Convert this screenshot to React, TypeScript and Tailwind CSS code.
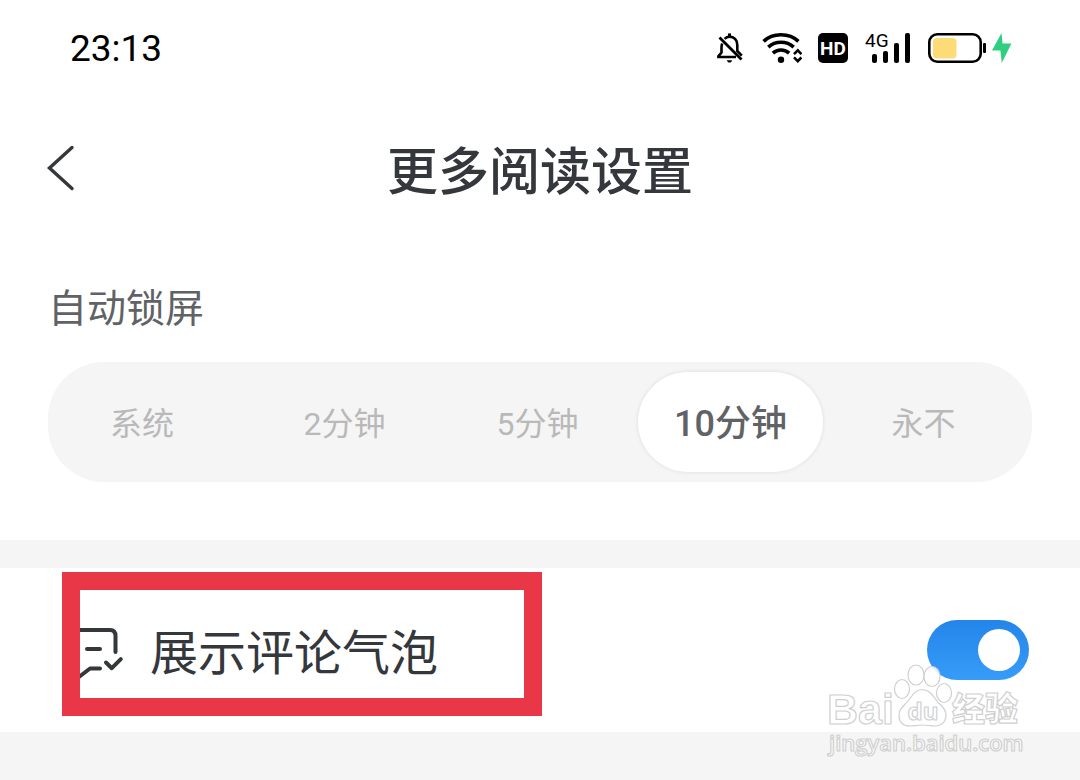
import React, { useState } from "react";

const lockOptions = ["系统", "2分钟", "5分钟", "10分钟", "永不"];

const StatusIcons = () => {
  return (
    <div className="flex items-center gap-4 text-black">
      {/* muted bell */}
      <svg className="h-[30px] w-[30px]" viewBox="0 0 30 30" fill="none" stroke="currentColor" strokeWidth="2.6">
        <path d="M3.5 4.5 25.5 26.5" strokeWidth="2.8" />
        <path d="M6.2 10.5C5.6 12 5.5 13 5.5 14.5V19.5L2.4 23.2V24H20" />
        <path d="M8.6 5.8C10 4.4 11.8 3.6 13.5 3.6C18 3.6 21.3 7 21.3 12V18L25.8 22.6" />
        <path d="M13.5 0.4V3.6" strokeWidth="3" />
        <path d="M10.8 27.3H16.2C15.6 29 14.8 29.6 13.5 29.6C12.2 29.6 11.4 29 10.8 27.3Z" fill="currentColor" stroke="none" />
      </svg>
      {/* wifi */}
      <svg className="h-[30px] w-[40px]" viewBox="0 0 40 30" fill="none" stroke="currentColor" strokeWidth="3.6">
        <path d="M1.6 8.4C6.2 3.9 12.2 1.8 19 1.8C25.8 1.8 31.8 3.9 36.4 8.4" />
        <path d="M6.3 14.2C9.8 11 14 9.3 19 9.3C24 9.3 28.2 11 31.7 14.2" />
        <path d="M10.9 20.1C13.2 18 15.8 17 19 17C22.2 17 24.8 18 27.1 20.1" />
        <circle cx="19" cy="26.8" r="3.2" fill="currentColor" stroke="none" />
        <path d="M32 21.2 35.8 17.4 39.4 21.2M32 24.4 35.8 28.2 39.4 24.4" strokeWidth="2.6" />
      </svg>
      {/* HD voice */}
      <svg className="h-[30px] w-[30px]" viewBox="0 0 30 30">
        <rect width="30" height="30" rx="5" fill="currentColor" />
        <text x="15" y="22" textAnchor="middle" fill="#fff" className="font-[Roboto] text-[19px] font-bold">
          HD
        </text>
      </svg>
      {/* signal */}
      <svg className="h-[30px] w-[48px] overflow-visible" viewBox="0 0 48 30" fill="currentColor">
        <text x="1" y="14" className="font-[Roboto] text-[19px]">
          4G
        </text>
        <rect x="8" y="21" width="5" height="9" rx="2" />
        <rect x="19" y="18" width="5" height="12" rx="2" />
        <rect x="30" y="10" width="5" height="20" rx="2" />
        <rect x="41" y="0" width="5" height="30" rx="2" />
      </svg>
      {/* battery, charging */}
      <svg className="h-[30px] w-[84px]" viewBox="0 0 84 30">
        <rect x="1.3" y="1.3" width="51.4" height="27.4" rx="8" fill="none" stroke="currentColor" strokeWidth="2.6" />
        <rect x="5" y="5" width="23.5" height="20.5" rx="4" fill="#fddc78" />
        <rect x="55" y="10" width="3" height="10" rx="1" fill="currentColor" />
        <path d="M73.5 0 64 17.6H72.4L73.8 30L83.4 10.6H74.6Z" fill="#2fcf80" />
      </svg>
    </div>
  );
};

const CommentIcon = () => {
  return (
    <svg
      className="h-[56px] w-[52px] shrink-0"
      viewBox="0 2 52 56"
      fill="none"
      stroke="#34373b"
      strokeWidth="4"
      strokeLinecap="round"
      strokeLinejoin="round"
    >
      <path d="M43.5 28V12Q43.5 6 38 6H8Q3 6 3 12V56L18 44.5H28" />
      <path d="M15 25H28" />
      <path d="M34 38.5 39.8 44.2 48.8 35.2" />
    </svg>
  );
};

const Watermark = () => {
  return (
    <svg
      className="pointer-events-none absolute top-[92px] right-[50px] h-[100px] w-[210px]"
      viewBox="0 0 210 100"
      fill="#fff"
      fillOpacity="0.85"
      stroke="#d0d0d0"
      strokeWidth="1.2"
    >
      <text x="7" y="64" className="font-['Liberation_Sans'] text-[43px] font-bold">
        Bai
      </text>
      <ellipse cx="82" cy="29" rx="7.5" ry="9.5" />
      <ellipse cx="96" cy="15" rx="8" ry="10" />
      <ellipse cx="112" cy="16.5" rx="8" ry="10" />
      <ellipse cx="124" cy="33" rx="7.5" ry="9.5" />
      <path d="M102 29.5C110 29.5 113 36 117 41C121 46 126 48 126 55C126 62 121 66 115 66C110 66 107 65 102 65C97 65 94 66 90 66C83 66 79 62 79 55C79 48 84 46 88 41C92 36 95 29.5 102 29.5Z" />
      <text x="103" y="60" textAnchor="middle" className="font-['Open_Sans'] text-[24px] font-bold">
        du
      </text>
      <text x="132" y="61" className="font-['Noto_Sans_CJK_SC'] text-[33px] font-black">
        经验
      </text>
      <text x="9" y="91" className="font-['Open_Sans'] text-[22px] font-semibold">
        jingyan.baidu.com
      </text>
    </svg>
  );
};

const App = () => {
  const [lock, setLock] = useState("10分钟");
  const [bubbles, setBubbles] = useState(true);

  return (
    <div className="flex min-h-screen flex-col bg-white font-[Roboto,'Noto_Sans_CJK_SC',sans-serif] text-[#34373b]">
      <div className="flex h-24 items-center justify-between pr-[68px] pl-[70px]">
        <time className="text-[37px] leading-none text-black">23:13</time>
        <StatusIcons />
      </div>

      <header className="grid h-36 grid-cols-[1fr_auto_1fr] items-center px-11">
        <button type="button" aria-label="返回" className="w-8">
          <svg className="h-[48px] w-8" viewBox="0 0 32 48" fill="none" stroke="currentColor" strokeWidth="3.4" strokeLinecap="round">
            <path d="M28 3.5 5.5 24 28 44.5" />
          </svg>
        </button>
        <h1 className="pt-[10px] text-[51px] font-medium">更多阅读设置</h1>
      </header>

      <div className="px-12 pt-[42px] pb-[58px]">
        <h2 id="lock-title" className="mb-[26px] text-[39px] leading-[54px] text-[#606266]">
          自动锁屏
        </h2>
        <div
          role="radiogroup"
          aria-labelledby="lock-title"
          className="grid h-[120px] grid-cols-[200fr_193fr_193fr_193fr_205fr] rounded-[56px] bg-[#f5f5f5] py-[10px]"
        >
          {lockOptions.map((option) => (
            <label
              key={option}
              className="flex cursor-pointer items-center justify-center pt-1 text-[32px] text-[#b9b9b9] first:pr-3 last:pr-3 has-checked:mx-1 has-checked:rounded-full has-checked:bg-white has-checked:text-[36px] has-checked:font-medium has-checked:text-[#606266] has-checked:shadow-[0_0_4px_rgba(0,0,0,0.1)]"
            >
              <input
                type="radio"
                name="lock"
                className="sr-only"
                checked={lock === option}
                onChange={() => setLock(option)}
              />
              {option}
            </label>
          ))}
        </div>
      </div>

      <div className="h-7 bg-[#f5f5f5]" />

      <section className="relative flex h-[164px] items-center pr-[51px] pl-[72px]">
        <div className="flex flex-1 items-center gap-[26px] pt-2">
          <CommentIcon />
          <label htmlFor="bubbles" className="text-[48px]">
            展示评论气泡
          </label>
        </div>
        <input
          id="bubbles"
          type="checkbox"
          role="switch"
          checked={bubbles}
          onChange={(e) => setBubbles(e.target.checked)}
          className="flex h-[60px] w-[102px] appearance-none items-center rounded-full bg-gray-300 px-[9px] before:size-[42px] before:rounded-full before:bg-white checked:justify-end checked:bg-linear-to-b checked:from-[#2385ea] checked:to-[#379cf8]"
        />
        {/* highlight */}
        <div className="pointer-events-none absolute top-1 left-[62px] h-[144px] w-[480px] border-[18px] border-[#e93748]" />
        <Watermark />
      </section>

      <div className="min-h-12 flex-1 bg-[#f5f5f5]" />
    </div>
  );
};

export default App;
